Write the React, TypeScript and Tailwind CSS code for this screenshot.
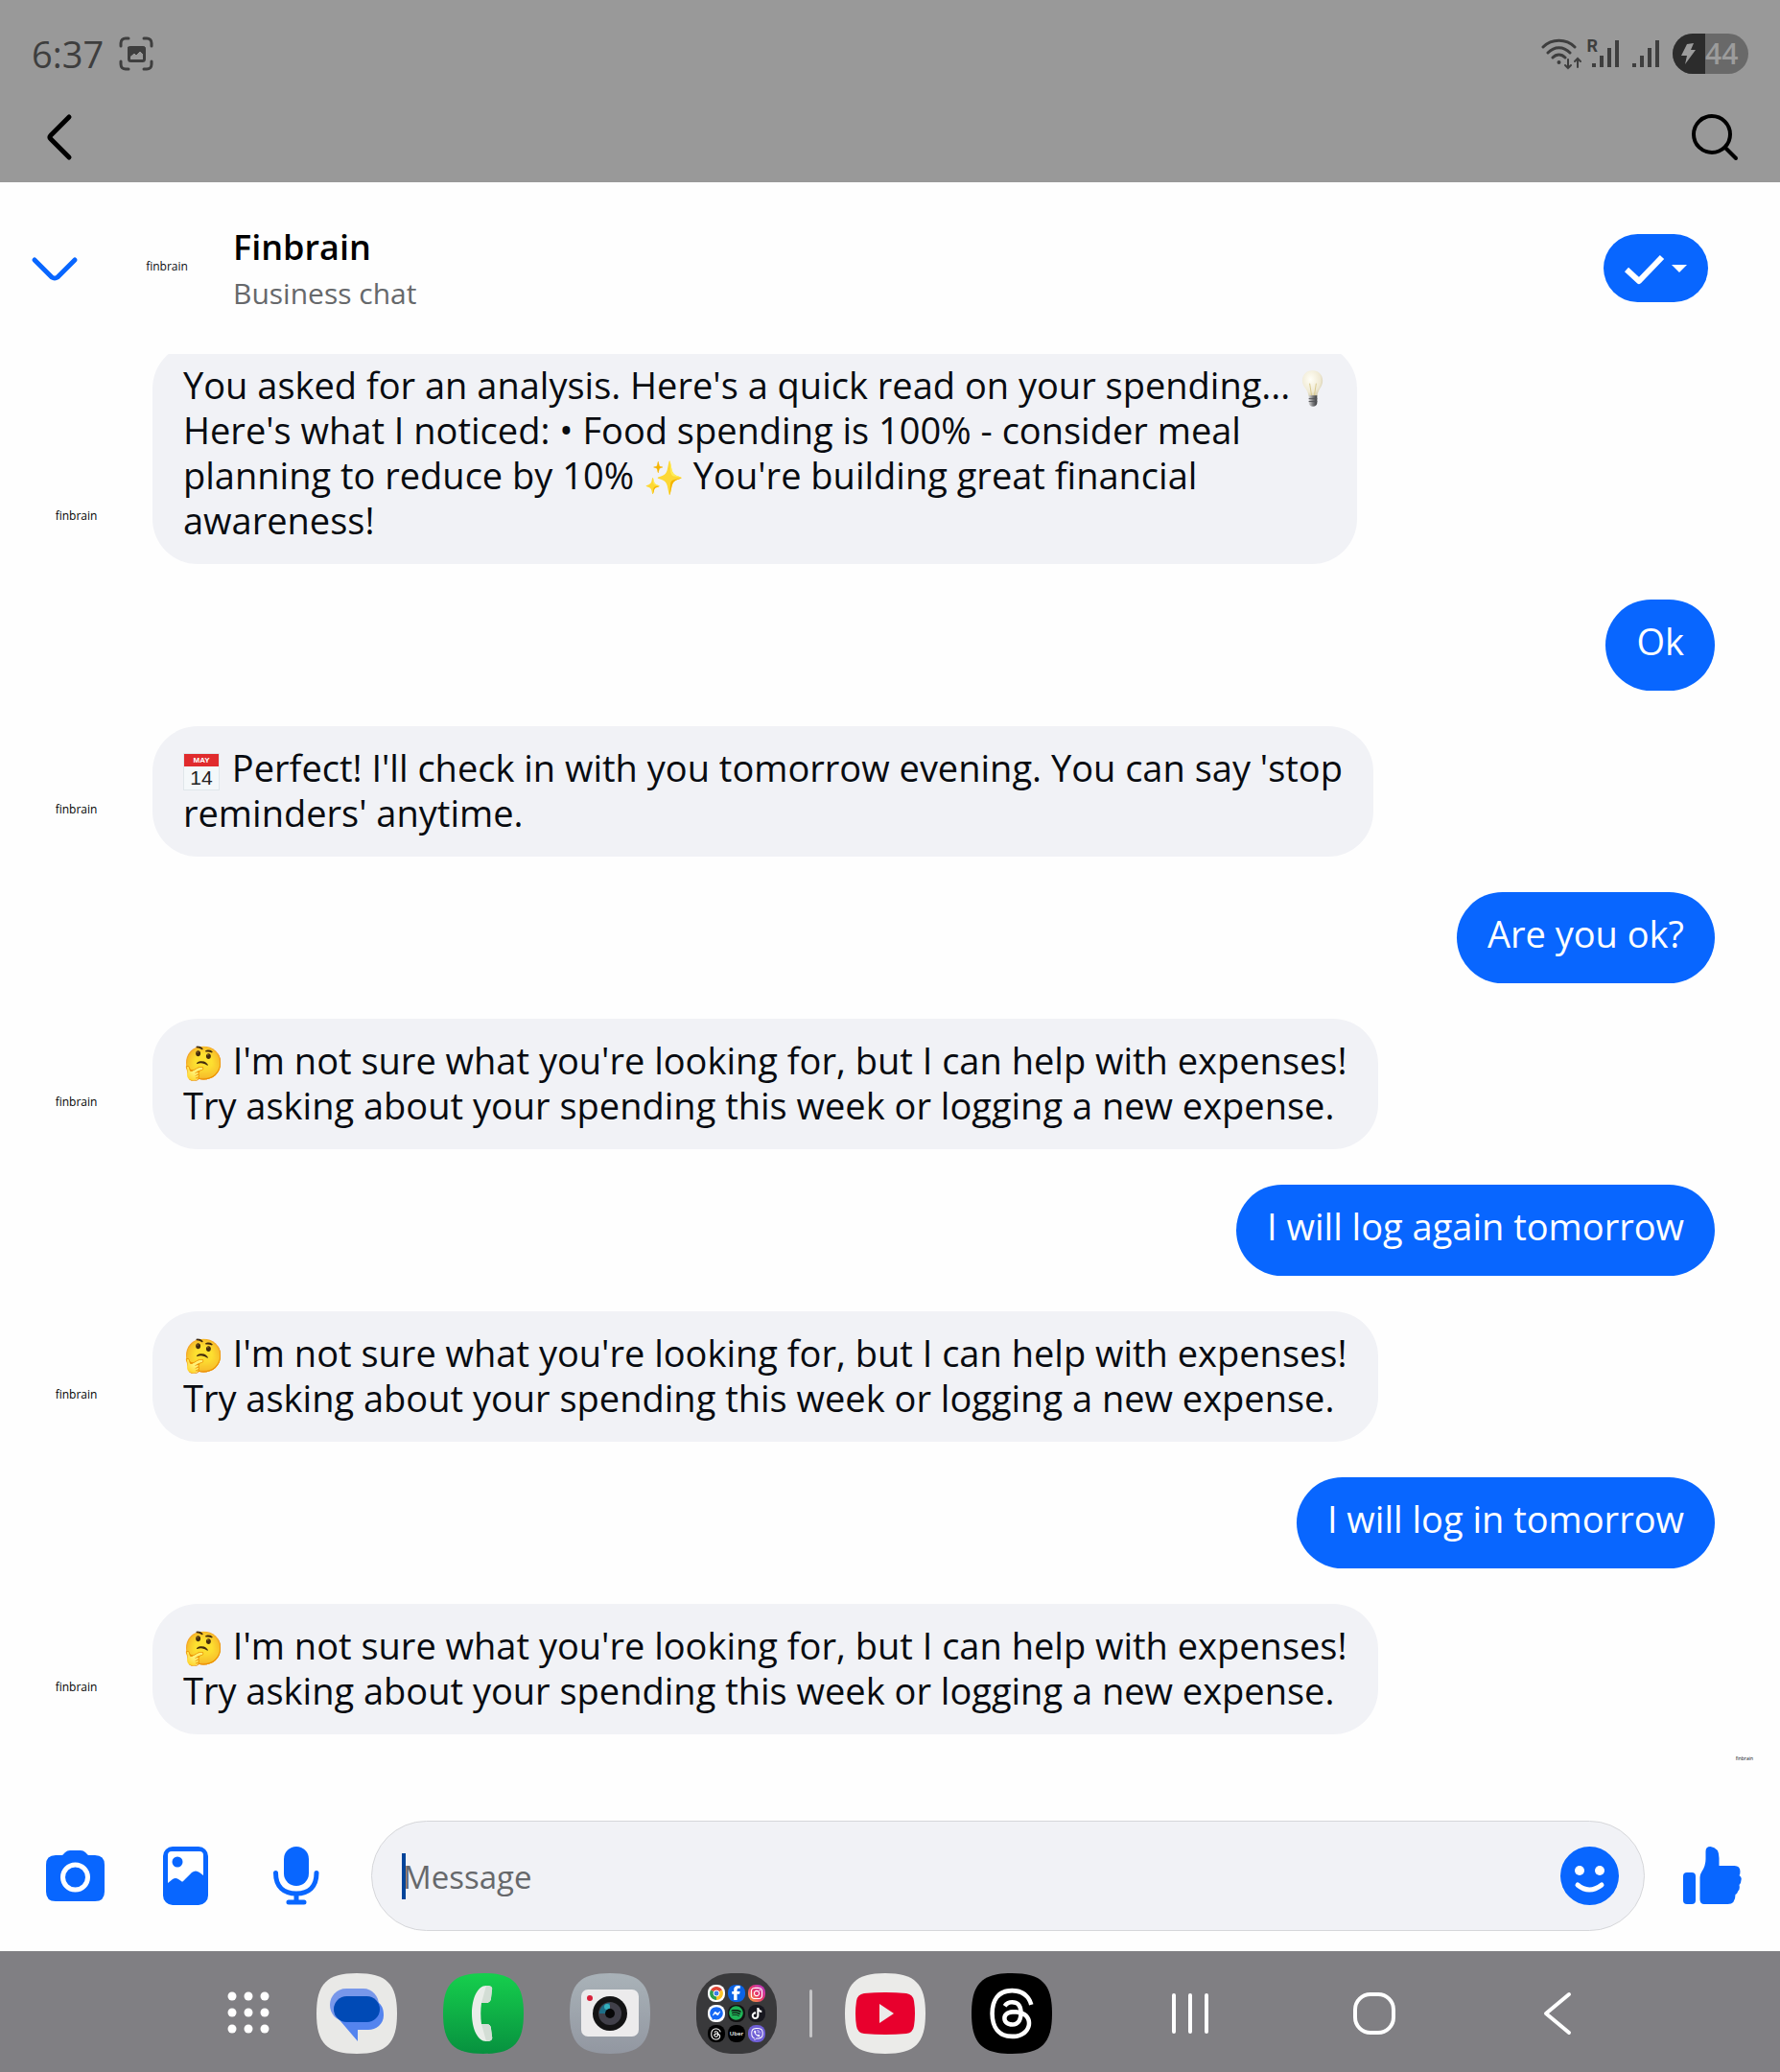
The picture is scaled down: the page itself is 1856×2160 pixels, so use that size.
import type { ReactNode } from "react";
import {
  FaFacebookF,
  FaFacebookMessenger,
  FaInstagram,
  FaSpotify,
  FaThreads,
  FaTiktok,
  FaViber,
} from "react-icons/fa6";

const SQUIRCLE = "M42 0C73 0 84 11 84 42S73 84 42 84 0 73 0 42 11 0 42 0Z";

function Emoji({ children }: { children: string }) {
  return <span className="text-[34px] leading-none">{children}</span>;
}

function BulbEmoji() {
  return (
    <svg role="img" aria-label="light bulb" viewBox="6 0 29 41" className="inline-block h-10 w-7 align-[-9px]">
      <defs>
        <radialGradient id="bulb" cx="0.4" cy="0.35" r="0.7">
          <stop offset="0" stopColor="#fffef6" />
          <stop offset="0.7" stopColor="#efe9d3" />
          <stop offset="1" stopColor="#cfc6a4" />
        </radialGradient>
        <linearGradient id="socket">
          <stop offset="0" stopColor="#d9d9d9" />
          <stop offset="0.5" stopColor="#77787a" />
          <stop offset="1" stopColor="#3e3f42" />
        </linearGradient>
      </defs>
      <path d="M20 1c7 0 11 5 11 11 0 7-5 9-6 17h-9c-1-8-7-10-7-17C9 6 13 1 20 1Z" fill="url(#bulb)" />
      <path d="M17 15l2 13M24 15l-2 13" stroke="#d9c98c" strokeWidth="1" />
      <path d="M16 28h9v8c0 2-2 4-4.500 4S16 38 16 36Z" fill="url(#socket)" />
      <path d="M16 31.500h9M16 34.500h9" stroke="#55565a" strokeWidth="1" />
    </svg>
  );
}

function CalendarEmoji() {
  return (
    <span role="img" aria-label="calendar" className="mr-[3px] inline-flex h-[39px] w-[38px] flex-col border border-[#dfe6ea] bg-[#f4f8fa] text-center align-middle font-['Liberation_Sans',sans-serif]">
      <span className="block h-[13px] shrink-0 bg-[#e02b2d] text-[8px] leading-[13px] font-bold text-white">MAY</span>
      <span className="block h-6 text-[21px] leading-6 text-[#222]">14</span>
    </span>
  );
}

function Incoming({ children }: { children: ReactNode }) {
  return (
    <li className="flex shrink-0 items-end">
      <div className="flex h-[100px] w-[159px] shrink-0 items-center justify-center text-[12px] text-black">finbrain</div>
      <p className="w-fit rounded-[47px] bg-[#f1f2f6] px-8 pt-5 pb-[22px]">{children}</p>
    </li>
  );
}

function Outgoing({ children }: { children: ReactNode }) {
  return (
    <li className="flex shrink-0 justify-end pr-[68px]">
      <p className="w-fit rounded-full bg-[#0866ff] px-8 pt-5 pb-7 text-white">{children}</p>
    </li>
  );
}

function Confused() {
  return (
    <Incoming>
      <Emoji>🤔</Emoji> I'm not sure what you're looking for, but I can help with expenses!
      <br />
      Try asking about your spending this week or logging a new expense.
    </Incoming>
  );
}

function SignalBars() {
  return (
    <svg viewBox="0 0 32 32" className="size-8">
      <path d="M4 26v4M12 18v12M20 10v20M28 2v28" stroke="currentColor" strokeWidth="4" />
    </svg>
  );
}

function StatusBar() {
  return (
    <div className="flex items-center justify-between pr-[33px] pl-[33px] text-[#3e3e3e]">
      <div className="flex items-center gap-4">
        <span className="text-[38px] leading-[44px] font-medium">6:37</span>
        <svg viewBox="0 0 36 36" className="size-9" fill="none" stroke="currentColor" strokeWidth="3" strokeLinecap="round">
          <path d="M2 10V7c0-3 2-5 5-5h3M26 2h3c3 0 5 2 5 5v3M34 26v3c0 3-2 5-5 5h-3M10 34H7c-3 0-5-2-5-5v-3" />
          <rect x="10.500" y="11.500" width="16" height="14" rx="2" />
          <path d="M10 11h17v9l-5-5-4 4-2-2-6 5Z" fill="currentColor" strokeWidth="1" />
        </svg>
      </div>
      <div className="flex items-center">
        <svg viewBox="0 0 44 36" className="h-9 w-11" fill="none" stroke="currentColor" strokeWidth="3" strokeLinecap="round">
          <path d="M2 11c9-9 24-9 33 0M7 17c7-7 16-7 23 0M12 22c4-4 9-4 13 0" />
          <circle cx="18.500" cy="27" r="1" fill="currentColor" strokeWidth="2" />
          <path d="M28 24v9M25 30l3 3 3-3M38 32v-9M35 26l3-3 3 3" strokeWidth="2" />
        </svg>
        <div className="ml-[3px] flex">
          <span className="-mr-2 h-8 font-['Roboto',sans-serif] text-[18px] leading-4 font-bold">R</span>
          <SignalBars />
        </div>
        <div className="ml-[10px]">
          <SignalBars />
        </div>
        <div className="ml-3 flex h-[42px] w-[79px] items-center overflow-hidden rounded-full bg-[#696969] text-[#9c9c9c]">
          <span className="flex h-full w-[34px] items-center justify-center bg-[#2c2c2c]">
            <svg viewBox="0 0 16 24" className="h-6 w-4" fill="currentColor">
              <path d="M6 2l7-1-3 7h5L4 23l2-9H0Z" />
            </svg>
          </span>
          <span className="text-[30px] leading-none font-semibold">44</span>
        </div>
      </div>
    </div>
  );
}

function TopBar() {
  return (
    <header className="flex h-[190px] shrink-0 flex-col bg-[#999] pt-[34px]">
      <StatusBar />
      <div className="mt-[40px] flex items-center justify-between pr-[43px] pl-[46px] text-black">
        <button type="button" aria-label="Back">
          <svg viewBox="0 0 32 50" className="h-[50px] w-8" fill="none" stroke="currentColor" strokeWidth="5" strokeLinecap="round" strokeLinejoin="round">
            <path d="M26 4L7 23q-2 2 0 4l19 19" />
          </svg>
        </button>
        <button type="button" aria-label="Search">
          <svg viewBox="0 0 50 50" className="size-[50px]" fill="none" stroke="currentColor" strokeWidth="4" strokeLinecap="round">
            <circle cx="22" cy="22" r="19" />
            <path d="M36 36l11 11" />
          </svg>
        </button>
      </div>
    </header>
  );
}

function ChatHeader() {
  return (
    <div className="flex h-[179px] shrink-0 items-center pr-[75px] pl-8">
      <button type="button" aria-label="Collapse chat" className="pt-0.5 text-[#0866ff]">
        <svg viewBox="0 0 50 28" className="h-7 w-[50px]" fill="none" stroke="currentColor" strokeWidth="5" strokeLinecap="round" strokeLinejoin="round">
          <path d="M4 4l18 18q3 2 6 0L46 4" />
        </svg>
      </button>
      <div className="ml-[52px] flex w-20 items-center justify-center pb-1 text-[12px]">finbrain</div>
      <div className="ml-[29px] flex-1 pt-1">
        <h1 className="text-[36px] leading-[48px] font-semibold text-black">Finbrain</h1>
        <p className="text-[30px] leading-[48px] text-[#66686b]">Business chat</p>
      </div>
      <button type="button" aria-label="Mark as done" className="flex h-[71px] w-[109px] items-center justify-center rounded-full bg-[#0866ff] text-white">
        <svg viewBox="0 0 68 34" className="h-[34px] w-[68px]" fill="none">
          <path d="M3 18l13 12L40 5" stroke="currentColor" strokeWidth="6" strokeLinejoin="round" />
          <path d="M50 13h16l-8 8Z" fill="currentColor" />
        </svg>
      </button>
    </div>
  );
}

function Composer() {
  return (
    <form className="flex shrink-0 items-center pt-[41px] pr-10 pb-[21px] pl-12 text-[#0866ff]">
      <div className="flex items-center gap-[54px]">
        <button type="button" aria-label="Camera">
          <svg viewBox="0 0 61 61" className="size-[61px]">
            <path d="M10 9h7l3-3q2-2 5-2h11q3 0 5 2l3 3h7q10 0 10 10v28q0 10-10 10H10Q0 57 0 47V19Q0 9 10 9Z" fill="currentColor" />
            <circle cx="30.500" cy="32" r="13" fill="none" stroke="#fff" strokeWidth="5" />
          </svg>
        </button>
        <button type="button" aria-label="Photos">
          <svg viewBox="0 0 61 61" className="size-[61px]">
            <rect x="7" y="0" width="47" height="61" rx="10" fill="currentColor" />
            <path d="M12 9q0-4 4-4h29q4 0 4 4v21l-4-3q-4-3-8 0l-9 9q-1 1-2 0l-3-2q-3-2-6 0l-5 4Z" fill="#fff" />
            <circle cx="22" cy="16" r="5.500" fill="currentColor" />
          </svg>
        </button>
        <button type="button" aria-label="Voice message">
          <svg viewBox="0 0 61 61" className="size-[61px]" fill="none" stroke="currentColor" strokeLinecap="round">
            <rect x="18" y="0" width="26" height="41" rx="13" fill="currentColor" stroke="none" />
            <path d="M9.500 27.500C9.500 42 18 49 31 49s21-7 21-21.500" strokeWidth="5" />
            <path d="M31 50v8M23 58h16" strokeWidth="5" />
          </svg>
        </button>
      </div>
      <div className="mx-10 ml-12 flex h-[115px] flex-1 items-center rounded-full border border-[#d6d7da] bg-[#f1f2f6] pr-[26px] pl-[31px]">
        <span className="-mr-[3px] h-12 w-1 shrink-0 bg-[#00449a]" />
        <input
          type="text"
          aria-label="Message"
          placeholder="Message"
          className="h-full min-w-0 flex-1 bg-transparent pt-0.5 text-[33px] text-black outline-none placeholder:text-[#66686b]"
        />
        <button type="button" aria-label="Emoji">
          <svg viewBox="0 0 61 61" className="size-[61px]">
            <circle cx="30.500" cy="30.500" r="30.500" fill="currentColor" />
            <circle cx="20" cy="25" r="5" fill="#fff" />
            <circle cx="41" cy="25" r="5" fill="#fff" />
            <path d="M18 40q12 10 25 0" fill="none" stroke="#fff" strokeWidth="5" strokeLinecap="round" />
          </svg>
        </button>
      </div>
      <button type="button" aria-label="Send a like">
        <svg viewBox="0 0 61 61" className="size-[61px]" fill="currentColor">
          <rect x="0" y="27" width="13" height="33" rx="4" />
          <path d="M17.500 32q0-3 2-6 4-6 4-13V5q0-5 5-5 9 1 9 12v8h16q6 0 6 6 0 3-1 4 3 2 2 5 0 3-2 5 1 4-1 6-1 3-3 4 0 10-8 10H22q-4.500 0-4.500-5Z" />
        </svg>
      </button>
    </form>
  );
}

function MiniApp({ className, children }: { className: string; children?: ReactNode }) {
  return <span className={`flex size-[18px] items-center justify-center rounded-[8px] ${className}`}>{children}</span>;
}

function AppIcon({ label, children }: { label: string; children: ReactNode }) {
  return (
    <button type="button" aria-label={label}>
      <svg viewBox="0 0 84 84" className="size-[84px]">{children}</svg>
    </button>
  );
}

function Dock() {
  return (
    <nav className="flex h-[126px] shrink-0 items-center justify-between bg-[#807f83] pt-1 pr-[215px] pl-[235px] text-white">
      <div className="flex items-center gap-12">
        <button type="button" aria-label="All apps">
          <svg viewBox="0 0 47 47" className="size-[47px]" fill="currentColor">
            {[5, 22, 39].map((y) => [5, 22, 39].map((x) => <circle key={`${x}-${y}`} cx={x + 2} cy={y} r="4.500" />))}
          </svg>
        </button>
        <AppIcon label="Messages">
          <path d={SQUIRCLE} fill="#e9e9e7" />
          <path d="M31 16h18c9 0 16 8 16 17S58 50 49 50H31C20 50 14 42 14 33s7-17 17-17Z" fill="#7897ea" />
          <path d="M19 43L43 71V59h11c8 0 16-6 16-15 0-7-2-11-6-14Z" fill="#5484ef" />
          <rect x="18" y="24" width="48" height="27" rx="13.500" fill="#004ab6" />
        </AppIcon>
        <AppIcon label="Phone">
          <defs>
            <linearGradient id="phone" x2="0" y2="1">
              <stop offset="0" stopColor="#16cf4d" />
              <stop offset="1" stopColor="#07913f" />
            </linearGradient>
          </defs>
          <path d={SQUIRCLE} fill="url(#phone)" />
          <path d="M45 13c4 0 7 1 6 4l-1 9c0 3-2 5-5 5h-5c-1 7-1 15 0 22h5c3 0 5 2 5 5l1 8c1 3-1 5-6 5-9 0-15-13-15-29s6-29 15-29Z" fill="#e9ede9" />
          <path d="M45 13c4 0 7 1 6 4l-1 9c0 3-2 5-5 5h-5ZM40 53h5c3 0 5 2 5 5l1 8c1 3-1 5-6 5Z" fill="#d3ddd5" />
        </AppIcon>
        <AppIcon label="Camera">
          <defs>
            <linearGradient id="camera" x2="0" y2="1">
              <stop offset="0" stopColor="#a9b2b8" />
              <stop offset="1" stopColor="#9297a1" />
            </linearGradient>
          </defs>
          <path d={SQUIRCLE} fill="url(#camera)" />
          <rect x="12" y="17" width="60" height="49" rx="7" fill="#ecebec" />
          <circle cx="21" cy="26" r="3" fill="#d81f3a" />
          <circle cx="42" cy="42" r="18" fill="#131314" />
          <circle cx="42" cy="42" r="12" fill="#41404a" />
          <path d="M42 42V31a11 11 0 0 0-11 11Z" fill="#1d6f88" />
          <circle cx="39" cy="35" r="3" fill="#36b0bd" />
          <circle cx="42" cy="42" r="5" fill="#070708" />
        </AppIcon>
        <button type="button" aria-label="App folder" className="grid size-[84px] grid-cols-3 place-items-center rounded-[36px] bg-[#39393b] p-[10px]">
          <MiniApp className="bg-white">
            <svg viewBox="0 0 14 14" className="size-[14px]">
              <path d="M7 7L1 3.500A7 7 0 0 1 13 3.500Z" fill="#e04434" />
              <path d="M7 7l6-3.500A7 7 0 0 1 7 14Z" fill="#f8c32a" />
              <path d="M7 7v7A7 7 0 0 1 1 3.500Z" fill="#2a9d4e" />
              <circle cx="7" cy="7" r="3" fill="#3f7fe8" stroke="#fff" />
            </svg>
          </MiniApp>
          <MiniApp className="bg-[#0b63e5]"><FaFacebookF size={15} /></MiniApp>
          <MiniApp className="bg-linear-to-tr from-[#f9a826] via-[#e6316b] to-[#b52bd0]"><FaInstagram size={14} /></MiniApp>
          <MiniApp className="bg-white text-[#1468f5]"><FaFacebookMessenger size={14} /></MiniApp>
          <MiniApp className="bg-[#111] text-[#1fb457]"><FaSpotify size={15} /></MiniApp>
          <MiniApp className="bg-[#17171f]"><FaTiktok size={12} /></MiniApp>
          <MiniApp className="bg-black"><FaThreads size={13} /></MiniApp>
          <MiniApp className="bg-black text-[6px] leading-none font-semibold">Uber</MiniApp>
          <MiniApp className="bg-[#6f5fd6]"><FaViber size={13} /></MiniApp>
        </button>
        <div className="-mx-4 flex w-[7px] justify-center">
          <span className="h-[50px] w-[3px] rounded-full bg-[#c4c4c6]" />
        </div>
        <AppIcon label="YouTube">
          <path d={SQUIRCLE} fill="#ebebe9" />
          <path d="M20 21q22-2 44 0 7 1 8 8 2 13 0 26-1 7-8 8-22 2-44 0-7-1-8-8-2-13 0-26 1-7 8-8Z" fill="#e8002d" />
          <path d="M36 32v20l15-10Z" fill="#ebebe9" />
        </AppIcon>
        <AppIcon label="Threads">
          <path d={SQUIRCLE} fill="#000" />
          <FaThreads x="14" y="14" size={56} />
        </AppIcon>
      </div>
      <div className="flex items-center gap-[148px]">
        <button type="button" aria-label="Recent apps">
          <svg viewBox="0 0 44 46" className="h-[46px] w-11" stroke="currentColor" strokeWidth="4" strokeLinecap="round">
            <path d="M5 4v38M22 4v38M39 4v38" />
          </svg>
        </button>
        <button type="button" aria-label="Home">
          <svg viewBox="0 0 46 46" className="size-[46px]" fill="none" stroke="currentColor" strokeWidth="4">
            <rect x="2" y="3" width="40" height="40" rx="16" />
          </svg>
        </button>
        <button type="button" aria-label="Back" className="ml-0.5">
          <svg viewBox="0 0 34 46" className="h-[46px] w-[34px]" fill="none" stroke="currentColor" strokeWidth="4" strokeLinecap="round" strokeLinejoin="round">
            <path d="M29 3L5 23l24 20" />
          </svg>
        </button>
      </div>
    </nav>
  );
}

export default function App() {
  return (
    <div className="flex h-screen flex-col overflow-hidden bg-[#fefefe] font-['Open_Sans',sans-serif] text-[#080b10]">
      <TopBar />
      <ChatHeader />
      <ul className="flex min-h-0 flex-1 flex-col justify-end gap-[37px] overflow-hidden text-[38px] leading-[47px]">
        <Incoming>
          You asked for an analysis. Here's a quick read on your spending... <BulbEmoji />
          <br />
          Here's what I noticed: • Food spending is 100% - consider meal
          <br />
          planning to reduce by 10% <Emoji>✨</Emoji> You're building great financial
          <br />
          awareness!
        </Incoming>
        <Outgoing>Ok</Outgoing>
        <Incoming>
          <CalendarEmoji /> Perfect! I'll check in with you tomorrow evening. You can say 'stop
          <br />
          reminders' anytime.
        </Incoming>
        <Outgoing>Are you ok?</Outgoing>
        <Confused />
        <Outgoing>I will log again tomorrow</Outgoing>
        <Confused />
        <Outgoing>I will log in tomorrow</Outgoing>
        <Confused />
      </ul>
      <div className="flex h-[49px] shrink-0 items-center justify-end pt-0.5 pr-7 text-[5px]">finbrain</div>
      <Composer />
      <Dock />
    </div>
  );
}
